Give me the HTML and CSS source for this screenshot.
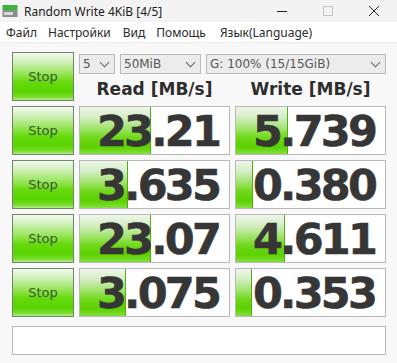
FILE: index.html
```html
<!DOCTYPE html>
<html lang="ru">
<head>
    <meta charset="UTF-8">
    <title>Random Write 4KiB [4/5]</title>
    <link rel="stylesheet" href="styles.css">
</head>
<body>
<div class="window">
    <div class="titlebar">
        <svg class="app-icon" width="16" height="16" viewBox="0 0 16 16">
            <rect x="0.5" y="2" width="15" height="5" fill="#3bb53b"/>
            <rect x="0.5" y="7" width="15" height="7" fill="#8c8c8c"/>
            <rect x="2" y="9" width="9" height="3" fill="#d8d8d8"/>
        </svg>
        <span class="title">Random Write 4KiB [4/5]</span>
        <div class="controls">
            <svg width="46" height="20" viewBox="0 0 46 20"><line x1="18" y1="10.5" x2="28" y2="10.5" stroke="#222" stroke-width="1"/></svg>
            <svg width="46" height="20" viewBox="0 0 46 20"><rect x="18.5" y="5.5" width="9" height="9" fill="none" stroke="#c4c4c4" stroke-width="1"/></svg>
            <svg width="46" height="20" viewBox="0 0 46 20"><path d="M18 5 L28 15 M28 5 L18 15" stroke="#222" stroke-width="1"/></svg>
        </div>
    </div>
    <div class="menubar">
        <span class="m-file">Файл</span>
        <span class="m-settings">Настройки</span>
        <span class="m-view">Вид</span>
        <span class="m-help">Помощь</span>
        <span class="m-lang">Язык(Language)</span>
    </div>

    <div class="main">
        <div class="grid">
            <button class="stop">Stop</button>
            <div class="head-cell">
                <div class="selects">
                    <div class="select s-count">5<span class="chev"></span></div>
                    <div class="select s-size">50MiB<span class="chev"></span></div>
                    <div class="select s-drive">G: 100% (15/15GiB)<span class="chev"></span></div>
                </div>
                <div class="heads">
                    <div class="head">Read [MB/s]</div>
                    <div class="head">Write [MB/s]</div>
                </div>
            </div>

            <button class="stop">Stop</button>
            <div class="value"><div class="bar" style="width: 70px"></div><span>23.21</span></div>
            <div class="value"><div class="bar" style="width: 51px"></div><span>5.739</span></div>

            <button class="stop">Stop</button>
            <div class="value"><div class="bar" style="width: 47px"></div><span>3.635</span></div>
            <div class="value"><div class="bar" style="width: 16px"></div><span>0.380</span></div>

            <button class="stop">Stop</button>
            <div class="value"><div class="bar" style="width: 70px"></div><span>23.07</span></div>
            <div class="value"><div class="bar" style="width: 48px"></div><span>4.611</span></div>

            <button class="stop">Stop</button>
            <div class="value"><div class="bar" style="width: 45px"></div><span>3.075</span></div>
            <div class="value"><div class="bar" style="width: 15px"></div><span>0.353</span></div>
        </div>
        <div class="comment"></div>
    </div>
</div>
</body>
</html>
```

FILE: styles.css
```css
/* CrystalDiskMark window */
body { margin: 0; background: #ffffff; font-family: 'Noto Sans', 'Open Sans', sans-serif; }
.window { width: 397px; height: 363px; background: #f8f8f8; overflow: hidden; }

.titlebar { height: 22px; display: flex; align-items: center; background: #f3f3f3; }
.app-icon { margin-left: 2px; margin-right: 6px; }
.title { font-size: 12px; color: #1a1a1a; }
.controls { margin-left: auto; display: flex; }

.menubar { height: 20px; display: flex; align-items: center; background: #ffffff; border-bottom: 1px solid #ececec; font-size: 12px; color: #2a2a2a; }
.m-file { margin-left: 6px; }
.m-settings { margin-left: 11px; }
.m-view { margin-left: 12px; }
.m-help { margin-left: 11px; }
.m-lang { margin-left: 14px; }

.main { padding: 9px 0 0 12px; }
.grid { display: grid; grid-template-columns: 62px 151px 151px; grid-auto-rows: 49px; column-gap: 5px; row-gap: 5px; }

.stop { margin: 0; padding: 0; border: 1px solid #6f8468; font-family: 'DejaVu Sans', sans-serif; font-size: 13px; color: #3b5630; cursor: default;
    background: linear-gradient(to bottom, #f4faf0 0%, #d2f0bc 18%, #9be660 42%, #66da0c 62%, #5ad300 82%, #7ade30 94%, #b8ec90 100%); }

.head-cell { grid-column: 2 / 4; display: flex; flex-direction: column; }
.selects { display: flex; gap: 5px; padding-top: 2px; height: 20px; }
.select { position: relative; box-sizing: border-box; height: 20px; border: 1px solid #b9b9b9; background: #ececec; font-family: 'DejaVu Sans', sans-serif; font-size: 12px; color: #555; padding-left: 3px; line-height: 18px; }
.s-count { width: 36px; }
.s-size { width: 81px; }
.s-drive { width: 180px; }
.chev { position: absolute; right: 6px; top: 4px; width: 6px; height: 6px; border-right: 1px solid #666; border-bottom: 1px solid #666; transform: rotate(45deg); }

.heads { display: grid; grid-template-columns: 151px 151px; column-gap: 5px; flex: 1; }
.head { text-align: center; font-family: 'DejaVu Sans', sans-serif; font-weight: bold; font-size: 17px; color: #2e2e2e; padding-top: 5px; }

.value { position: relative; box-sizing: border-box; border: 1px solid #b8b8b8; background: #ffffff; display: flex; align-items: center; justify-content: flex-end; padding-right: 10px; }
.bar { position: absolute; left: 0; top: 0; bottom: 0; border-right: 1px solid #4fae10;
    background: linear-gradient(to bottom, #eef6ea 0%, #d4eec4 22%, #a2e46e 45%, #6fd818 65%, #5cd000 85%, #86e040 100%); }
.value span { position: relative; display: block; font-family: 'DejaVu Sans', sans-serif; font-weight: bold; font-size: 43px; color: #363636; -webkit-text-stroke: 0.6px #363636; line-height: 40px; letter-spacing: -2.8px; }

.comment { margin-top: 9px; width: 374px; height: 29px; box-sizing: border-box; border: 1px solid #b8b8b8; background: #ffffff; }
```
